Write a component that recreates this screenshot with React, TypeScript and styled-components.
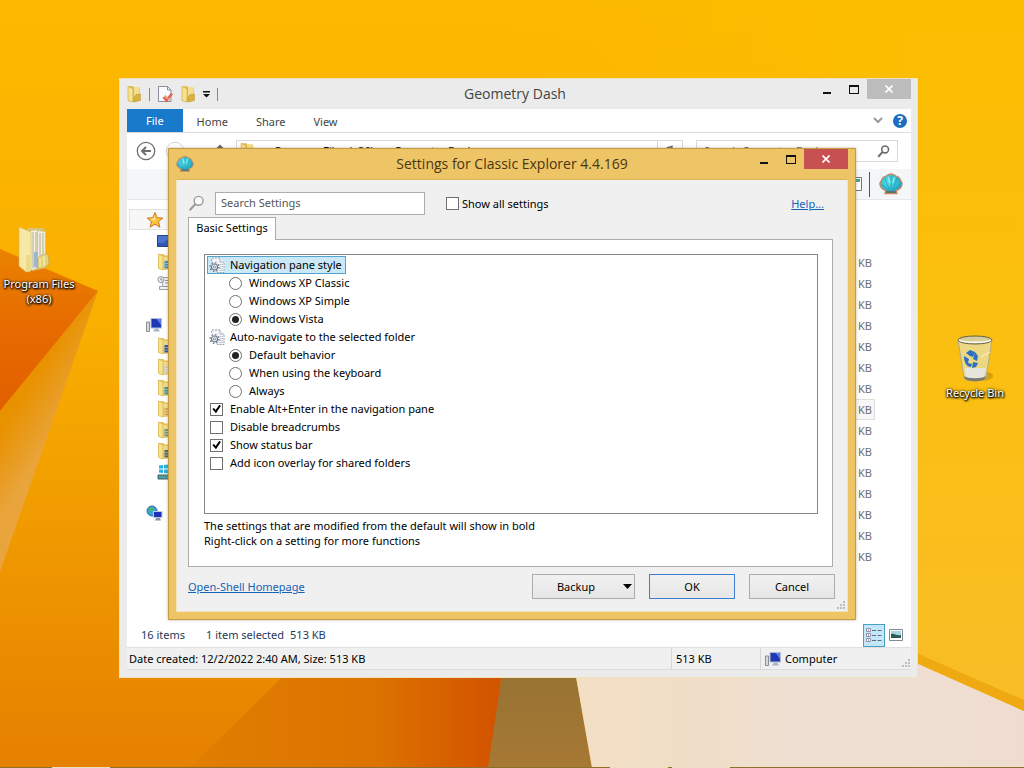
import React from "react";
import styled, { createGlobalStyle, css } from "styled-components";

const GlobalStyle = createGlobalStyle`
  *, *::before, *::after { box-sizing: border-box; }
  html, body, #root { height: 100%; }
  body {
    margin: 0;
    overflow: hidden;
    font: 11px/16px "Noto Sans", "Open Sans", sans-serif;
    color: #000;
  }
  button, input { font: inherit; color: inherit; }
`;

/* ---------- Desktop ---------- */

const Desktop = styled.main`
  position: relative;
  height: 100%;
  min-height: 560px;
  overflow: hidden;
  background: #fcb900;
`;

const WallpaperSvg = styled.svg`
  position: absolute;
  inset: 0;
  width: 100%;
  height: 100%;
`;

const Shortcut = styled.button<{ $side: "left" | "right"; $top: number }>`
  position: absolute;
  top: ${(p) => p.$top}px;
  ${(p) => (p.$side === "left" ? "left: 0;" : "right: 10px;")}
  width: 78px;
  padding: 0;
  border: 0;
  background: none;
  display: flex;
  flex-direction: column;
  align-items: center;
  gap: 1px;
  color: #fff;
  line-height: 15px;
  text-shadow: 0 1px 2px #000, 1px 1px 2px #000, 0 0 3px #000;
`;

const ShortcutLabel = styled.span`
  margin: 0 -6px;
`;

/* ---------- Window chrome ---------- */

const Explorer = styled.section`
  position: absolute;
  inset: 78px 106px 90px 119px;
  display: flex;
  flex-direction: column;
  padding: 0 6px 7px 7px;
  background: #ebebeb;
  border: 1px solid #efe2bd;
`;

const Dialog = styled.section`
  position: absolute;
  inset: 148px 168px;
  display: flex;
  flex-direction: column;
  padding: 0 7px;
  padding-bottom: 7px;
  background: #edc566;
  border: 1px solid #c59a45;
  box-shadow: 0 0 3px rgba(120, 90, 20, 0.4);
`;

const TitleBar = styled.header`
  display: grid;
  grid-template-columns: 1fr auto 1fr;
  flex: none;
  height: 30px;
`;

const Title = styled.h1<{ $shift?: boolean; $color: string }>`
  margin: 0;
  padding-right: ${(p) => (p.$shift ? 8 : 0)}px;
  align-self: center;
  font-family: "Open Sans", "Noto Sans", sans-serif;
  font-size: 14px;
  line-height: 20px;
  font-weight: 400;
  white-space: nowrap;
  color: ${(p) => p.$color};
`;

const Controls = styled.div`
  display: flex;
  justify-content: flex-end;
  align-items: flex-start;
`;

const ControlButton = styled.button<{ $close?: string }>`
  width: ${(p) => (p.$close ? 44 : 27)}px;
  height: 20px;
  padding: 0;
  border: 0;
  display: grid;
  place-items: center;
  color: ${(p) => (p.$close ? "#fff" : "#111")};
  background: ${(p) => p.$close ?? "transparent"};
`;

const QuickAccess = styled.div`
  display: flex;
  align-items: center;
  gap: 7px;
`;

const QuickDivider = styled.span`
  width: 1px;
  height: 13px;
  background: #888;
`;

const PlainButton = styled.button`
  display: grid;
  place-items: center;
  padding: 0;
  border: 0;
  background: none;
`;

/* ---------- Explorer content ---------- */

const Content = styled.div`
  flex: 1;
  min-height: 0;
  display: flex;
  flex-direction: column;
  background: #fff;
`;

const Ribbon = styled.nav`
  display: flex;
  flex: none;
  height: 24px;
  border-bottom: 1px solid #dadbdc;
`;

const RibbonTab = styled.button<{ $file?: boolean }>`
  border: 0;
  height: ${(p) => (p.$file ? 23 : 25)}px;
  padding: 0 ${(p) => (p.$file ? 19 : 14)}px;
  color: ${(p) => (p.$file ? "#fff" : "#444")};
  background: ${(p) => (p.$file ? "#1979ca" : "transparent")};
`;

const RibbonEnd = styled.div`
  margin-left: auto;
  padding-right: 4px;
  display: flex;
  align-items: center;
  gap: 10px;
`;

const AddressRow = styled.div`
  flex: none;
  height: 36px;
  display: flex;
  align-items: center;
  padding: 0 13px 0 9px;
`;

const NavButtons = styled.div`
  display: flex;
  align-items: center;
  gap: 9px;
  width: 100px;
`;

const UpButton = styled(PlainButton)`
  margin-left: 20px;
`;

const Address = styled.div`
  flex: 1;
  min-width: 0;
  height: 22px;
  display: flex;
  align-items: center;
  gap: 20px;
  padding-left: 3px;
  border: 1px solid #d9d9d9;
  white-space: nowrap;
  overflow: hidden;
`;

const Refresh = styled.button`
  margin-left: auto;
  width: 25px;
  height: 20px;
  padding: 0;
  border: 0;
  border-left: 1px solid #d9d9d9;
  background: none;
  display: grid;
  place-items: center;
`;

const SearchBox = styled.div`
  width: 202px;
  height: 22px;
  margin-left: 13px;
  padding: 0 7px;
  display: flex;
  align-items: center;
  border: 1px solid #d9d9d9;
`;

const BareInput = styled.input`
  flex: 1;
  min-width: 0;
  padding: 0;
  border: 0;
  outline: 0;
  background: none;
  &::placeholder { color: #6d6d6d; opacity: 1; }
`;

const ClassicBar = styled.div`
  flex: none;
  height: 31px;
  display: flex;
  align-items: center;
  justify-content: flex-end;
  gap: 7px;
  padding-right: 8px;
  background: #f5f6f7;
  border-bottom: 1px solid #e6e7e8;
`;

const BarDivider = styled.span`
  width: 1px;
  height: 25px;
  margin-right: 2px;
  background: #555;
`;

const Body = styled.div`
  flex: 1;
  min-height: 0;
  display: flex;
  justify-content: space-between;
`;

const Tree = styled.ul`
  list-style: none;
  margin: 0;
  padding: 9px 0 0 2px;
  width: 140px;
`;

const TreeItem = styled.li<{ $depth: number; $active?: boolean }>`
  height: 21px;
  display: flex;
  align-items: center;
  padding-left: ${(p) => 17 + p.$depth * 11}px;
  ${(p) => p.$active && css`
    background: #f7f7f7;
    box-shadow: inset 0 0 0 1px #e2e2e2;
  `}
`;

const Files = styled.table`
  align-self: flex-start;
  width: 100px;
  margin-right: 36px;
  border-collapse: collapse;
  color: #6d6d6d;
  text-align: right;
`;

const HeadCell = styled.th`
  height: 31px;
  padding: 0;
`;

const SizeCell = styled.td<{ $active?: boolean }>`
  height: 21px;
  padding: 0 3px 0 0;
  ${(p) => p.$active && css`
    background: #f7f7f7;
    box-shadow: inset 0 0 0 1px #dedede;
  `}
`;

const ItemBar = styled.div`
  flex: none;
  height: 24px;
  display: flex;
  align-items: center;
  padding: 0 4px 0 14px;
  color: #1e395b;
`;

const ItemText = styled.span<{ $gap: number }>`
  margin-right: ${(p) => p.$gap}px;
`;

const ViewButtons = styled.div`
  margin-left: auto;
  display: flex;
`;

const ViewButton = styled.button<{ $on?: boolean }>`
  width: 22px;
  height: 23px;
  padding: 0;
  display: grid;
  place-items: center;
  border: 1px solid ${(p) => (p.$on ? "#4a9fc4" : "transparent")};
  background: ${(p) => (p.$on ? "#c3e7f8" : "transparent")};
`;

const StatusBar = styled.footer`
  flex: none;
  height: 23px;
  display: flex;
  background: #f0f0f0;
  border-top: 1px solid #e0e0e0;
  border-bottom: 1px solid #d9dcdf;
`;

const StatusCell = styled.div<{ $width?: number }>`
  ${(p) => (p.$width ? `width: ${p.$width}px; border-left: 1px solid #d7d7d7;` : "flex: 1;")}
  display: flex;
  align-items: center;
  gap: 4px;
  padding-left: ${(p) => (p.$width ? 4 : 2)}px;
  white-space: nowrap;
`;

const GripSlot = styled.span`
  margin-left: auto;
  align-self: flex-end;
  line-height: 0;
`;

/* ---------- Settings dialog ---------- */

const Client = styled.div`
  flex: 1;
  min-height: 0;
  display: flex;
  flex-direction: column;
  padding: 12px 14px 0 11px;
  background: #f0f0f0;
  border: 1px solid #f3e3bc;
  border-top-color: #dcb35a;
`;

const SearchRow = styled.div`
  flex: none;
  display: flex;
  align-items: center;
`;

const SettingsSearch = styled.input`
  width: 210px;
  height: 23px;
  margin: 0 21px 0 10px;
  padding: 0 5px 2px;
  border: 1px solid #abadb3;
  outline: 0;
  background: #fff;
  &::placeholder { color: #555; opacity: 1; }
`;

const Link = styled.a`
  color: #1663b5;
  text-decoration: underline;
`;

const HelpLink = styled(Link)`
  margin: 0 9px 0 auto;
`;

const Tab = styled.button`
  flex: none;
  position: relative;
  align-self: flex-start;
  width: 88px;
  height: 23px;
  margin: 2px 0 -1px;
  padding: 0 0 2px;
  border: 1px solid #acacac;
  border-bottom: 0;
  background: #fff;
`;

const Panel = styled.div`
  flex: 1;
  min-height: 0;
  display: flex;
  flex-direction: column;
  padding: 14px 14px 18px 15px;
  background: #fff;
  border: 1px solid #acacac;
`;

const OptionTree = styled.div`
  flex: 1;
  min-height: 0;
  overflow: hidden;
  padding: 1px 2px;
  border: 1px solid #828790;
`;

const Group = styled.div``;

const GroupHead = styled.div<{ $selected?: boolean }>`
  display: flex;
  align-items: center;
  gap: 5px;
  width: fit-content;
  height: 18px;
  padding: 0 3px 0 1px;
  border: 1px solid transparent;
  ${(p) => p.$selected && css`
    background: #cbe8f6;
    border-color: #4fa5d0;
  `}
`;

const Option = styled.label<{ $depth: number }>`
  display: flex;
  align-items: center;
  gap: 7px;
  width: fit-content;
  height: 18px;
  padding-left: ${(p) => 3 + p.$depth * 19}px;
`;

const Radio = styled.input.attrs({ type: "radio" })`
  appearance: none;
  width: 13px;
  height: 13px;
  margin: 0;
  border: 1px solid #707070;
  border-radius: 50%;
  background: #fff;
  display: grid;
  place-items: center;
  &:checked::before {
    content: "";
    width: 7px;
    height: 7px;
    border-radius: 50%;
    background: #222;
  }
`;

const Check = styled.input.attrs({ type: "checkbox" })`
  appearance: none;
  width: 13px;
  height: 13px;
  margin: 0;
  border: 1px solid #707070;
  background: #fff;
  display: grid;
  place-items: center;
  &:checked::before {
    content: "";
    width: 9px;
    height: 9px;
    background: #000;
    clip-path: polygon(4% 50%, 22% 38%, 40% 62%, 82% 4%, 98% 18%, 44% 96%);
  }
`;

const CheckLabel = styled.label`
  display: flex;
  align-items: center;
  gap: 3px;
`;

const Hint = styled.p`
  flex: none;
  margin: 4px 0 0;
  line-height: 15px;
`;

const Actions = styled.div`
  flex: none;
  height: 44px;
  display: flex;
  align-items: flex-start;
  gap: 14px;
  padding-top: 7px;
  margin-right: -2px;
`;

const HomeLink = styled(Link)`
  margin: 5px auto 0 0;
`;

const ActionButton = styled.button<{ $primary?: boolean; $menu?: boolean }>`
  width: ${(p) => (p.$menu ? 103 : 86)}px;
  height: 25px;
  padding: 0 ${(p) => (p.$menu ? 2 : 0)}px 0 0;
  border: 1px solid ${(p) => (p.$primary ? "#3c7fd0" : "#acacac")};
  background: linear-gradient(#f1f1f1, #e6e6e6);
  display: grid;
  grid-template-columns: ${(p) => (p.$menu ? "1fr 10px" : "1fr")};
  place-items: center;
`;

const MenuCaption = styled.span`
  padding-right: 3px;
`;

const DialogGrip = styled.span`
  position: absolute;
  right: 9px;
  bottom: 8px;
  line-height: 0;
`;

/* ---------- Drawings ---------- */

const Wallpaper = () => (
  <WallpaperSvg viewBox="0 0 1024 768" preserveAspectRatio="none" aria-hidden="true">
    <defs>
      <linearGradient id="sky" x1="0" y1="0" x2="0" y2="1">
        <stop offset="0" stopColor="#fdb900" />
        <stop offset=".42" stopColor="#f9af00" />
        <stop offset=".65" stopColor="#f19d00" />
        <stop offset="1" stopColor="#e68000" />
      </linearGradient>
      <linearGradient id="east" x1="0" y1="0" x2="0" y2="1">
        <stop offset="0" stopColor="#fcbd00" />
        <stop offset=".5" stopColor="#fabf12" />
        <stop offset="1" stopColor="#f8bd2b" />
      </linearGradient>
      <linearGradient id="northeast" x1="0" y1="0" x2="1" y2="0">
        <stop offset="0" stopColor="#fcbd00" stopOpacity="0" />
        <stop offset="1" stopColor="#fcbd00" />
      </linearGradient>
      <linearGradient id="wedge" x1="0" y1="0" x2="0" y2="1">
        <stop offset="0" stopColor="#ea8300" />
        <stop offset=".45" stopColor="#e66c00" />
        <stop offset="1" stopColor="#e35f00" />
      </linearGradient>
      <linearGradient id="rim" gradientUnits="userSpaceOnUse" x1="10" y1="415" x2="50" y2="440">
        <stop offset="0" stopColor="#e99200" />
        <stop offset=".6" stopColor="#e89c22" />
        <stop offset="1" stopColor="#e9a43c" />
      </linearGradient>
      <linearGradient id="ember" x1="0" y1="0" x2="1" y2="0">
        <stop offset="0" stopColor="#e17e00" />
        <stop offset=".6" stopColor="#dc7200" />
        <stop offset="1" stopColor="#d25100" />
      </linearGradient>
      <linearGradient id="dune" x1="0" y1="0" x2="0" y2="1">
        <stop offset="0" stopColor="#967233" />
        <stop offset="1" stopColor="#a67934" />
      </linearGradient>
      <linearGradient id="cream" x1="0" y1="0" x2="1" y2="0">
        <stop offset="0" stopColor="#f3dfc4" />
        <stop offset=".3" stopColor="#efdec8" />
        <stop offset=".5" stopColor="#efdfd2" />
        <stop offset="1" stopColor="#eeddd0" />
      </linearGradient>
    </defs>
    <rect width="1024" height="768" fill="url(#sky)" />
    <rect x="500" y="0" width="400" height="400" fill="url(#northeast)" />
    <rect x="900" y="0" width="124" height="768" fill="url(#east)" />
    <path d="M98 291 0 411V572Z" fill="url(#rim)" />
    <path d="M0 249 98 291 0 411Z" fill="url(#wedge)" />
    <path d="M310 650 190 768H490L505 650Z" fill="url(#ember)" />
    <path d="M504 660 488 768H592L573 660Z" fill="url(#dune)" />
    <path d="M573 660 592 768H1024V711L905 658Z" fill="url(#cream)" />
    <path d="M905 658 1024 711V700L905 648Z" fill="#efaa12" />
    <path d="M0 767.500H1024" stroke="#8e7128" />
    <path d="M52 767.500H110M610 767.500H668M672 767.500H730" stroke="#eadfc4" />
  </WallpaperSvg>
);

const Folder = () => (
  <svg width="15" height="18" viewBox="0 0 15 18" aria-hidden="true">
    <path d="M1 1.500 6 1l1 1 6 1v12l-6 2-6-1.500Z" fill="#e2c14e" />
    <path d="M7 2h5.500v8L7 11Z" fill="#f3df90" />
    <path d="M1 1.500 6 3.500V17l-5-1.500Z" fill="#f6e290" stroke="#c6a33c" strokeWidth=".6" />
    <path d="M9 9.500 13.500 9v6.500L7 17v-4Z" fill="#d9b340" stroke="#b8952f" strokeWidth=".5" />
  </svg>
);

const PropertiesIcon = () => (
  <svg width="17" height="18" viewBox="0 0 17 18" aria-hidden="true">
    <path d="M1.500 1.500h9l3.500 3.500v11.500H1.500Z" fill="#fafcff" stroke="#8a8f9c" />
    <path d="M10.500 1.500V5H14" fill="none" stroke="#8a8f9c" />
    <path d="m6.500 12 3 3.500L15 8.500" fill="none" stroke="#e0654a" strokeWidth="2.600" />
    <path d="m8 10.500 5 5" stroke="#eb9a83" strokeWidth="1.500" />
  </svg>
);

const CaretBar = () => (
  <svg width="7" height="7" viewBox="0 0 7 7" aria-hidden="true">
    <path d="M0 0h7v1.500H0ZM0 3h7L3.500 6.500Z" fill="#111" />
  </svg>
);

const MinimizeGlyph = () => (
  <svg width="8" height="12" viewBox="0 0 8 12" aria-hidden="true"><path d="M0 9h8v2H0Z" fill="currentColor" /></svg>
);
const MaximizeGlyph = () => (
  <svg width="10" height="9" viewBox="0 0 10 9" aria-hidden="true">
    <path d="M0 0h10v9H0ZM1 2v6h8V2Z" fill="currentColor" fillRule="evenodd" />
  </svg>
);
const CloseGlyph = () => (
  <svg width="8" height="8" viewBox="0 0 8 8" aria-hidden="true">
    <path d="m.5.5 7 7m0-7-7 7" stroke="currentColor" strokeWidth="1.600" />
  </svg>
);

const Shell = ({ size }: { size: number }) => (
  <svg width={size} height={size} viewBox="0 0 24 24" aria-hidden="true">
    <defs>
      <radialGradient id="shellFill" cx=".4" cy=".4" r=".7">
        <stop offset="0" stopColor="#5fe3ea" />
        <stop offset=".6" stopColor="#30b7cc" />
        <stop offset="1" stopColor="#2690ae" />
      </radialGradient>
    </defs>
    <path d="M7 18.500C3 18 .5 14 1 11l1.500-3L4 5.500 7 4l2.500-1.500L12 2l2.500.5L17 4l3 1.500L21.500 8 23 11c.5 3-2 7-6 7.500l1 3H6Z" fill="url(#shellFill)" stroke="#c98660" strokeWidth="1.300" />
    <path d="M12 19V4M10.500 19 6 6M13.500 19 18 6M9 18.500 3 12M15 18.500 21 12" stroke="#1d9db4" strokeWidth=".7" fill="none" />
    <path d="M11 11 9 4.500M14 11l1.500-6" stroke="#a5f2f2" strokeWidth="1" fill="none" />
    <path d="M7 20h10" stroke="#5b6a55" strokeWidth="1.500" />
  </svg>
);

const Magnifier = ({ size, color, thin }: { size: number; color: string; thin?: boolean }) => (
  <svg width={size} height={size} viewBox="0 0 16 16" aria-hidden="true">
    <circle cx="10" cy="5.500" r="4.200" fill="#fafafa" stroke={color} strokeWidth={thin ? 1.3 : 1.9} />
    <path d="M7 8.500 1.500 14.500" stroke={color} strokeWidth={thin ? 2 : 2.5} />
  </svg>
);

const Star = () => (
  <svg width="18" height="18" viewBox="0 0 18 18" aria-hidden="true">
    <path d="m9 1.500 2.200 5.200 5.600.4-4.300 3.600 1.400 5.500L9 13.200l-4.900 3 1.400-5.500L1.200 7.100l5.600-.4Z" fill="#fbc435" stroke="#cf7630" />
    <path d="M9 4v6L4.500 7.800l3.500-.4Z" fill="#fff0a0" />
  </svg>
);

const Monitor = () => (
  <svg width="16" height="16" viewBox="0 0 16 16" aria-hidden="true">
    <path d="M.5 5h3v9.500h-3Z" fill="#d5d8dc" stroke="#8b9097" />
    <path d="M4.500 1h11.500v10.500H4.500Z" fill="#b3bfd0" />
    <path d="M5.500 2h9.500v8.500H5.500Z" fill="#2038b4" />
    <path d="M10.500 2H15v6Z" fill="#5d7ff0" />
    <path d="M9 11.500h3l2 3H7Z" fill="#a7b4c5" />
  </svg>
);

const DesktopIcon = () => (
  <svg width="16" height="14" viewBox="0 0 16 14" aria-hidden="true">
    <path d="M.5 1.500h15v11H.5Z" fill="#2f57b4" stroke="#24418c" />
    <path d="M1 2h14L6 9H1Z" fill="#4a74ce" />
  </svg>
);

const Recent = () => (
  <svg width="16" height="16" viewBox="0 0 16 16" aria-hidden="true">
    <path d="M6 2.500h9.500v12H2.500v-3h3Z" fill="#f0f2f4" stroke="#98a1aa" />
    <path d="M8 5.500h6M8 8h6M6 11.500h8" stroke="#8c96a0" />
    <circle cx="4" cy="4.500" r="3" fill="#eef1f4" stroke="#8c96a0" />
    <path d="M4 3v2h1.500" fill="none" stroke="#77818b" />
  </svg>
);

const LibraryFolder = ({ tint }: { tint: string }) => (
  <svg width="16" height="18" viewBox="0 0 16 18" aria-hidden="true">
    <path d="M1.500 1h5L8 2.500h7V16l-8 1-5.500-1.500Z" fill="#e8c65a" />
    <path d="M6 4h9v12H7Z" fill="#f4dd8c" />
    <path d="M7.500 8H16v7.500H7.500Z" fill={tint} />
    <path d="M8 10.500h8M8 13h8" stroke="#fff" strokeOpacity=".45" />
    <path d="M1.500 1 6 3v14l-4.500-1.500Z" fill="#f7e28c" stroke="#d0ab45" strokeWidth=".6" />
  </svg>
);

const Drive = () => (
  <svg width="16" height="18" viewBox="0 0 16 18" aria-hidden="true">
    <path d="M2 2.500 6 2v3.500H2ZM7 2l6-.8v4.300H7ZM2 6.500h4V10l-4-.5ZM7 6.500h6v4.300L7 10Z" fill="#27b2e2" />
    <path d="M1 12h15v4H1Z" fill="#4e9e9c" stroke="#44636d" />
  </svg>
);

const Network = () => (
  <svg width="17" height="17" viewBox="0 0 17 17" aria-hidden="true">
    <circle cx="6" cy="6" r="5" fill="#38a6d4" stroke="#2c6f9c" />
    <path d="M3 3c3-2 5 0 3 2S2 8 3 3ZM7 7l3-1-1 4Z" fill="#52b552" />
    <path d="M7 6h9.500v7H7Z" fill="#c1cad8" />
    <path d="M8 7h7.500v5H8Z" fill="#1b32b8" />
    <path d="M10 13h4l1 2.500H9Z" fill="#8795aa" />
  </svg>
);

const GearPage = () => (
  <svg width="16" height="16" viewBox="0 0 16 16" aria-hidden="true">
    <path d="M2.500 3V.500H11L15.500 5v10.500H9" fill="#f2f5f9" />
    <path d="M2.500 4V1M3 1h8M15 6v9.500H8" fill="none" stroke="#97a2ae" strokeDasharray="2 1" />
    <path d="M11 1v4h4" fill="none" stroke="#aab4be" />
    <path d="M10 7.500h4M10.500 9.500H14M10 11.500h4M10 13.500h4" stroke="#c6ced6" />
    <circle cx="5.500" cy="10" r="4.400" fill="none" stroke="#6c7b8a" strokeWidth="1.400" strokeDasharray="1.500 1.950" />
    <circle cx="5.500" cy="10" r="3" fill="#f3f6f9" stroke="#6c7b8a" strokeWidth="1.200" />
    <circle cx="5.500" cy="10" r="1.100" fill="#fff" stroke="#6c7b8a" strokeWidth=".8" />
  </svg>
);

const Grip = () => (
  <svg width="11" height="11" viewBox="0 0 11 11" aria-hidden="true">
    <path d="M8 1h2v2H8ZM5 4h2v2H5ZM8 4h2v2H8ZM2 7h2v2H2ZM5 7h2v2H5ZM8 7h2v2H8Z" fill="#bcbcbc" />
  </svg>
);

const BigFolder = () => (
  <svg width="44" height="50" viewBox="0 0 44 50" aria-hidden="true">
    <path d="M10 3 26 3l3 4v36l-14 3Z" fill="#d8c376" />
    <path d="m14 6 6-1v38l-6 2ZM21 6l7 1v35l-7 1Z" fill="#f3efdc" />
    <path d="M16 7v36M19 7v36M23 8v34M26 8v34" stroke="#b5ad8c" />
    <path d="M17 27h4v15h-4Z" fill="#9eb5cf" />
    <path d="M2 2 14 7v39L9 47 2 41Z" fill="#f6e9a8" stroke="#cdb565" strokeWidth=".6" />
    <path d="M9 30h5v16l-5 1Z" fill="#ecd98a" />
    <path d="m21 33 4-3 6-1 1 10-5 4-6 1Z" fill="#e6d27c" stroke="#bfa653" strokeWidth=".6" />
    <path d="M23 33v9M27 31v10" stroke="#fbf3c4" />
  </svg>
);

const Bin = () => (
  <svg width="44" height="50" viewBox="0 0 44 50" aria-hidden="true">
    <ellipse cx="27" cy="42" rx="13" ry="5" fill="#a67b08" opacity=".45" />
    <path d="M5 6h34l-6 38c-3 4-19 4-22 0Z" fill="#e8dfa4" fillOpacity=".78" stroke="#b3ab87" />
    <path d="M12 34h21l-2 9c-4 2-14 2-18 0Z" fill="#e7e6de" />
    <path d="M11 42c4 3 18 3 22 0l-1 3c-4 3-16 3-20 0Z" fill="#7d7a6c" />
    <ellipse cx="22" cy="6" rx="17" ry="4" fill="#d6cd98" stroke="#66614f" />
    <path d="M6 6c4 3 28 3 32 0" fill="none" stroke="#fff" strokeWidth="1.500" />
    <path d="m13 19 4-3 5 2-2 5-3-1ZM22 18l3 4-1 5-4-2ZM11 22l5 3-1 4 4 1-1 3c-4 0-7-4-7-11ZM20 28l5 1-2 4-4 1Z" fill="#2c70c4" />
    <path d="m28 23 9-5" stroke="#fff" strokeOpacity=".7" />
  </svg>
);

const BackArrow = () => (
  <svg width="20" height="20" viewBox="0 0 20 20" aria-hidden="true">
    <circle cx="10" cy="10" r="8.700" fill="none" stroke="#6f6f6f" strokeWidth="1.300" />
    <path d="M15 10H6m4-4-4 4 4 4" fill="none" stroke="#6f6f6f" strokeWidth="2" />
  </svg>
);

const ForwardArrow = () => (
  <svg width="20" height="20" viewBox="0 0 20 20" aria-hidden="true">
    <circle cx="10" cy="10" r="8.700" fill="none" stroke="#d2d2d2" />
  </svg>
);

const UpArrow = () => (
  <svg width="12" height="14" viewBox="0 0 12 14" aria-hidden="true">
    <path d="M6 13V2M1.500 6.500 6 2l4.500 4.500" fill="none" stroke="#666" strokeWidth="2" />
  </svg>
);

const RefreshGlyph = () => (
  <svg width="12" height="12" viewBox="0 0 12 12" aria-hidden="true">
    <path d="M10 6a4 4 0 1 1-2-3.500M8 .5v3H5" fill="none" stroke="#666" strokeWidth="1.300" />
  </svg>
);

const HelpGlyph = styled.span`
  width: 14px;
  height: 14px;
  border-radius: 50%;
  background: #1a6fc0;
  color: #fff;
  font-size: 12px;
  font-weight: 700;
  line-height: 14px;
`;

/* ---------- Data ---------- */

const treeItems: { name: string; depth: number; icon: React.ReactNode }[] = [
  { name: "Favorites", depth: 0, icon: <Star /> },
  { name: "Desktop", depth: 1, icon: <DesktopIcon /> },
  { name: "Downloads", depth: 1, icon: <LibraryFolder tint="#3c8fc8" /> },
  { name: "Recent places", depth: 1, icon: <Recent /> },
  { name: "", depth: 0, icon: null },
  { name: "This PC", depth: 0, icon: <Monitor /> },
  { name: "Desktop folder", depth: 1, icon: <LibraryFolder tint="#3656a8" /> },
  { name: "Documents", depth: 1, icon: <LibraryFolder tint="#c9cdd4" /> },
  { name: "Downloads folder", depth: 1, icon: <LibraryFolder tint="#3f8fa8" /> },
  { name: "Music", depth: 1, icon: <LibraryFolder tint="#dcaa55" /> },
  { name: "Pictures", depth: 1, icon: <LibraryFolder tint="#6f9a83" /> },
  { name: "Videos", depth: 1, icon: <LibraryFolder tint="#4d6a62" /> },
  { name: "Local Disk", depth: 1, icon: <Drive /> },
  { name: "", depth: 0, icon: null },
  { name: "Network", depth: 0, icon: <Network /> },
];

const groups = [
  { title: "Navigation pane style", selected: true, options: ["Windows XP Classic", "Windows XP Simple", "Windows Vista"], value: 2 },
  { title: "Auto-navigate to the selected folder", selected: false, options: ["Default behavior", "When using the keyboard", "Always"], value: 0 },
];

const toggles = [
  { label: "Enable Alt+Enter in the navigation pane", on: true },
  { label: "Disable breadcrumbs", on: false },
  { label: "Show status bar", on: true },
  { label: "Add icon overlay for shared folders", on: false },
];

const fileRows = Array.from({ length: 16 }, (_, i) => i);

/* ---------- Views ---------- */

const WindowControls = ({ close }: { close: string }) => (
  <Controls>
    <ControlButton aria-label="Minimize"><MinimizeGlyph /></ControlButton>
    <ControlButton aria-label="Maximize"><MaximizeGlyph /></ControlButton>
    <ControlButton aria-label="Close" $close={close}><CloseGlyph /></ControlButton>
  </Controls>
);

const ExplorerWindow = () => (
  <Explorer aria-label="Geometry Dash">
    <TitleBar>
      <QuickAccess>
        <Folder />
        <QuickDivider />
        <PlainButton aria-label="Properties"><PropertiesIcon /></PlainButton>
        <PlainButton aria-label="New folder"><Folder /></PlainButton>
        <PlainButton aria-label="Customize"><CaretBar /></PlainButton>
        <QuickDivider />
      </QuickAccess>
      <Title $shift $color="#444">Geometry Dash</Title>
      <WindowControls close="#bcbcbc" />
    </TitleBar>
    <Content>
      <Ribbon>
        <RibbonTab $file>File</RibbonTab>
        <RibbonTab>Home</RibbonTab>
        <RibbonTab>Share</RibbonTab>
        <RibbonTab>View</RibbonTab>
        <RibbonEnd>
          <PlainButton aria-label="Expand ribbon">
            <svg width="10" height="7" viewBox="0 0 10 7" aria-hidden="true">
              <path d="m1 1 4 4 4-4" fill="none" stroke="#9a9a9a" strokeWidth="2" />
            </svg>
          </PlainButton>
          <PlainButton aria-label="Help"><HelpGlyph>?</HelpGlyph></PlainButton>
        </RibbonEnd>
      </Ribbon>
      <AddressRow>
        <NavButtons>
          <PlainButton aria-label="Back"><BackArrow /></PlainButton>
          <PlainButton aria-label="Forward"><ForwardArrow /></PlainButton>
          <UpButton aria-label="Up"><UpArrow /></UpButton>
        </NavButtons>
        <Address>
          <Folder />
          <span>Program Files (x86)</span>
          <span>Geometry Dash</span>
          <Refresh aria-label="Refresh"><RefreshGlyph /></Refresh>
        </Address>
        <SearchBox>
          <BareInput aria-label="Search Geometry Dash" placeholder="Search Geometry Dash" />
          <Magnifier size={13} color="#6a6a6a" />
        </SearchBox>
      </AddressRow>
      <ClassicBar>
        <svg width="14" height="14" viewBox="0 0 14 14" aria-hidden="true">
          <path d="M.5.5h13v13H.5Z" fill="#fff" stroke="#6d7a86" />
          <path d="M8 2h4v3H8Z" fill="#45a890" />
        </svg>
        <BarDivider />
        <PlainButton aria-label="Classic Explorer settings"><Shell size={24} /></PlainButton>
      </ClassicBar>
      <Body>
        <Tree>
          {treeItems.map((item, i) => (
            <TreeItem key={i} $depth={item.depth} $active={i === 0} title={item.name}>{item.icon}</TreeItem>
          ))}
        </Tree>
        <Files aria-label="Files">
          <thead><tr><HeadCell aria-label="Size" /></tr></thead>
          <tbody>
            {fileRows.map((i) => (
              <tr key={i}><SizeCell $active={i === 8}>{i > 0 && "KB"}</SizeCell></tr>
            ))}
          </tbody>
        </Files>
      </Body>
      <ItemBar>
        <ItemText $gap={21}>16 items</ItemText>
        <ItemText $gap={6}>1 item selected</ItemText>
        <ItemText $gap={0}>513 KB</ItemText>
        <ViewButtons>
          <ViewButton $on aria-label="Details view">
            <svg width="16" height="14" viewBox="0 0 16 14" aria-hidden="true">
              <path d="M.5.500h4v3h-4ZM.5 5.500h4v3h-4ZM.5 10.500h4v3h-4Z" fill="#fff" stroke="#8b96ab" />
              <path d="M2 2h1M2 7h1M2 12h1" stroke="#b0445c" />
              <path d="M6 2.500h4M11.500 2.500h4M6 7.500h4M11.500 7.500h4M6 12.500h4M11.500 12.500h4" stroke="#5a7080" />
            </svg>
          </ViewButton>
          <ViewButton aria-label="Thumbnail view">
            <svg width="14" height="12" viewBox="0 0 14 12" aria-hidden="true">
              <path d="M.5.500h13v11H.5Z" fill="#fff" stroke="#7d8c98" />
              <path d="M2 2h10v7H2Z" fill="#a9d5dc" />
              <path d="M2 5c3-1 5 2 10 1v3H2Z" fill="#2c5a58" />
            </svg>
          </ViewButton>
        </ViewButtons>
      </ItemBar>
      <StatusBar>
        <StatusCell>Date created: 12/2/2022 2:40 AM, Size: 513 KB</StatusCell>
        <StatusCell $width={89}>513 KB</StatusCell>
        <StatusCell $width={151}><Monitor />Computer<GripSlot><Grip /></GripSlot></StatusCell>
      </StatusBar>
    </Content>
  </Explorer>
);

const SettingsDialog = () => (
  <Dialog role="dialog" aria-label="Settings for Classic Explorer 4.4.169">
    <TitleBar>
      <QuickAccess><Shell size={18} /></QuickAccess>
      <Title $color="#4a3510">Settings for Classic Explorer 4.4.169</Title>
      <WindowControls close="#c75050" />
    </TitleBar>
    <Client>
      <SearchRow>
        <Magnifier size={17} color="#9a9a9a" thin />
        <SettingsSearch aria-label="Search Settings" placeholder="Search Settings" />
        <CheckLabel><Check />Show all settings</CheckLabel>
        <HelpLink href="#help">Help...</HelpLink>
      </SearchRow>
      <Tab role="tab" aria-selected="true">Basic Settings</Tab>
      <Panel>
        <OptionTree>
          {groups.map((g) => (
            <Group key={g.title} role="radiogroup" aria-label={g.title}>
              <GroupHead $selected={g.selected}><GearPage />{g.title}</GroupHead>
              {g.options.map((o, i) => (
                <Option key={o} $depth={1}><Radio name={g.title} defaultChecked={i === g.value} />{o}</Option>
              ))}
            </Group>
          ))}
          {toggles.map((t) => (
            <Option key={t.label} $depth={0}><Check defaultChecked={t.on} />{t.label}</Option>
          ))}
        </OptionTree>
        <Hint>
          The settings that are modified from the default will show in bold<br />
          Right-click on a setting for more functions
        </Hint>
      </Panel>
      <Actions>
        <HomeLink href="#homepage">Open-Shell Homepage</HomeLink>
        <ActionButton $menu>
          <MenuCaption>Backup</MenuCaption>
          <svg width="9" height="5" viewBox="0 0 9 5" aria-hidden="true"><path d="M0 0h9L4.500 5Z" /></svg>
        </ActionButton>
        <ActionButton $primary>OK</ActionButton>
        <ActionButton>Cancel</ActionButton>
      </Actions>
    </Client>
    <DialogGrip><Grip /></DialogGrip>
  </Dialog>
);

const App = () => (
  <>
    <GlobalStyle />
    <Desktop>
      <Wallpaper />
      <Shortcut $side="left" $top={225}><BigFolder /><ShortcutLabel>Program Files<br />(x86)</ShortcutLabel></Shortcut>
      <Shortcut $side="right" $top={334}><Bin /><ShortcutLabel>Recycle Bin</ShortcutLabel></Shortcut>
      <ExplorerWindow />
      <SettingsDialog />
    </Desktop>
  </>
);

export default App;
